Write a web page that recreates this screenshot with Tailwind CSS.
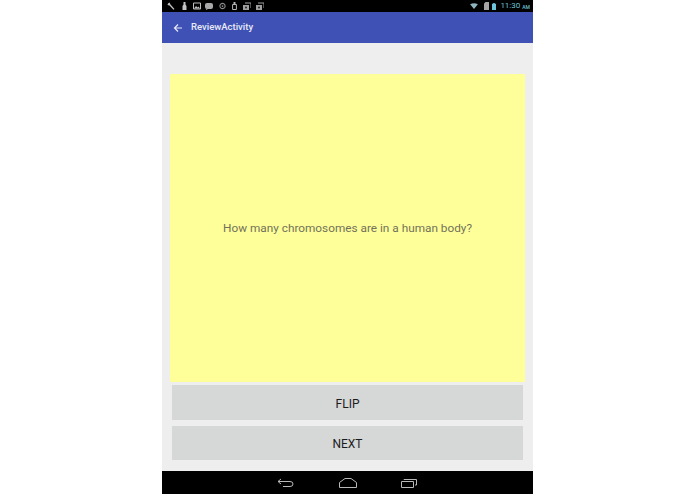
<!DOCTYPE html>
<html>
<head>
<meta charset="utf-8">
<script src="https://cdn.jsdelivr.net/npm/@tailwindcss/browser@4"></script>
</head>
<body class="bg-white overflow-hidden">
<div class="w-[695px] h-[494px] flex justify-center font-['Roboto',sans-serif]">
  <div class="w-[371px] h-[494px] flex flex-col bg-[#eeeeee]">
    <div class="h-[12px] bg-black flex items-center justify-between pl-[3px] pr-[3px]">
      <div class="grid grid-cols-[repeat(8,12.7px)] justify-items-center items-center">
        <svg width="8" height="8" viewBox="0 0 8 8"><path d="M1 1.500 2.500 0.500 3.500 2.500 7.500 7 6.500 7.800 2.500 3.500 0.500 3Z" fill="#c4c4c4"/></svg>
        <svg width="5" height="8" viewBox="0 0 5 8"><path d="M1.500 0h2v2.500L4.500 4v4h-4V4l1-1.500Z" fill="#c4c4c4"/></svg>
        <svg width="8" height="8" viewBox="0 0 8 8"><path d="M.5 1h7v6h-7Z" fill="none" stroke="#bdbdbd"/><path d="M1 6.500 3 4l1.500 1.500L5.500 4.500 7 6.500Z" fill="#bdbdbd"/></svg>
        <svg width="8" height="8" viewBox="0 0 8 8"><rect x="0" y="1" width="8" height="6" rx="2" fill="#a8a8a8"/><path d="M1 7 1 8 3 7Z" fill="#a8a8a8"/></svg>
        <svg width="7" height="8" viewBox="0 0 8 8"><circle cx="4" cy="4" r="3" fill="none" stroke="#8a8a8a" stroke-width="1.200"/><circle cx="4" cy="4" r="1" fill="#8a8a8a"/></svg>
        <svg width="5" height="8" viewBox="0 0 5 8"><path d="M.6 2.500h3.800v5H.6Z" fill="none" stroke="#b5b5b5"/><path d="M1.500 0h2v2h-2Z" fill="#b5b5b5"/></svg>
        <svg width="8" height="8" viewBox="0 0 8 8"><path d="M0 3h6v5H0Z" fill="#a0a0a0"/><path d="M2 1h6v5" fill="none" stroke="#a0a0a0"/><circle cx="3" cy="5.500" r="1" fill="#222"/></svg>
        <svg width="8" height="8" viewBox="0 0 8 8"><path d="M0 3h6v5H0Z" fill="#a0a0a0"/><path d="M2 1h6v5" fill="none" stroke="#a0a0a0"/><circle cx="3" cy="5.500" r="1" fill="#222"/></svg>
      </div>
      <div class="flex items-center">
        <svg width="8" height="6" viewBox="0 0 9 7" class="mr-[6px]"><path d="M0 1.500Q4.500-1 9 1.500L4.500 7Z" fill="#8fb4bf"/></svg>
        <svg width="5" height="8" viewBox="0 0 5 8" class="mr-[3px]"><path d="M1.500 0h3.500v8H0V1.500Z" fill="#a5a5a5"/></svg>
        <svg width="4" height="9" viewBox="0 0 5 9" class="mr-[4px]"><path d="M1.500 0h2v1H5v8H0V1h1.500Z" fill="#6cc4da"/></svg>
        <span class="text-[8px] leading-[12px] text-[#6fc1d6]">11:30</span>
        <span class="text-[5px] leading-[12px] text-[#6fc1d6] ml-[2px] mt-[1px] font-medium">AM</span>
      </div>
    </div>
    <div class="h-[31px] bg-[#3f51b5] flex items-center pl-[11px]">
      <svg width="10" height="10" viewBox="0 0 10 10" fill="none" stroke="#e8eaf6" stroke-width="1.200"><path d="M9 5H1.500M5 1.500 1.500 5 5 8.500"/></svg>
      <span class="ml-[8px] text-[9.500px] text-[#e8eaf6] font-medium">ReviewActivity</span>
    </div>
    <div class="flex-1 flex flex-col pt-[31px] px-[8px] pb-[11px]">
      <div class="h-[308px] bg-[#ffff99] flex items-center justify-center">
        <span class="text-[11.800px] text-[#72725a] mt-[1px]">How many chromosomes are in a human body?</span>
      </div>
      <div class="mt-[3px] mx-[2px] h-[35px] pt-[2px] bg-[#d6d7d7] flex items-center justify-center text-[12px] text-[#1c1c1c]">FLIP</div>
      <div class="mt-[6px] mx-[2px] h-[34px] pt-[1px] bg-[#d6d7d7] flex items-center justify-center text-[12px] text-[#1c1c1c]">NEXT</div>
    </div>
    <div class="h-[23px] bg-black relative flex items-center">
      <div class="flex items-center pl-[115px]">
        <svg width="17" height="10" viewBox="0 0 17 10" fill="none" stroke="#b9b9b9" stroke-width="1"><path d="M1 3.500H13Q16 3.500 16 6T13 8.500H6M4 1 1 3.500 4 6"/></svg>
        <svg width="18" height="10" viewBox="0 0 18 10" fill="none" stroke="#b9b9b9" stroke-width="1" class="ml-[45px]"><path d="M.5 9.500V4.500L6 .5h6l5.500 4v5Z"/></svg>
        <svg width="16" height="10" viewBox="0 0 16 10" fill="none" stroke="#b9b9b9" stroke-width="1" class="ml-[44px]"><path d="M.5 3.500h12v6H.5ZM3 2V1.500h12.500v5.500H14"/></svg>
      </div>
    </div>
  </div>
</div>
</body>
</html>
